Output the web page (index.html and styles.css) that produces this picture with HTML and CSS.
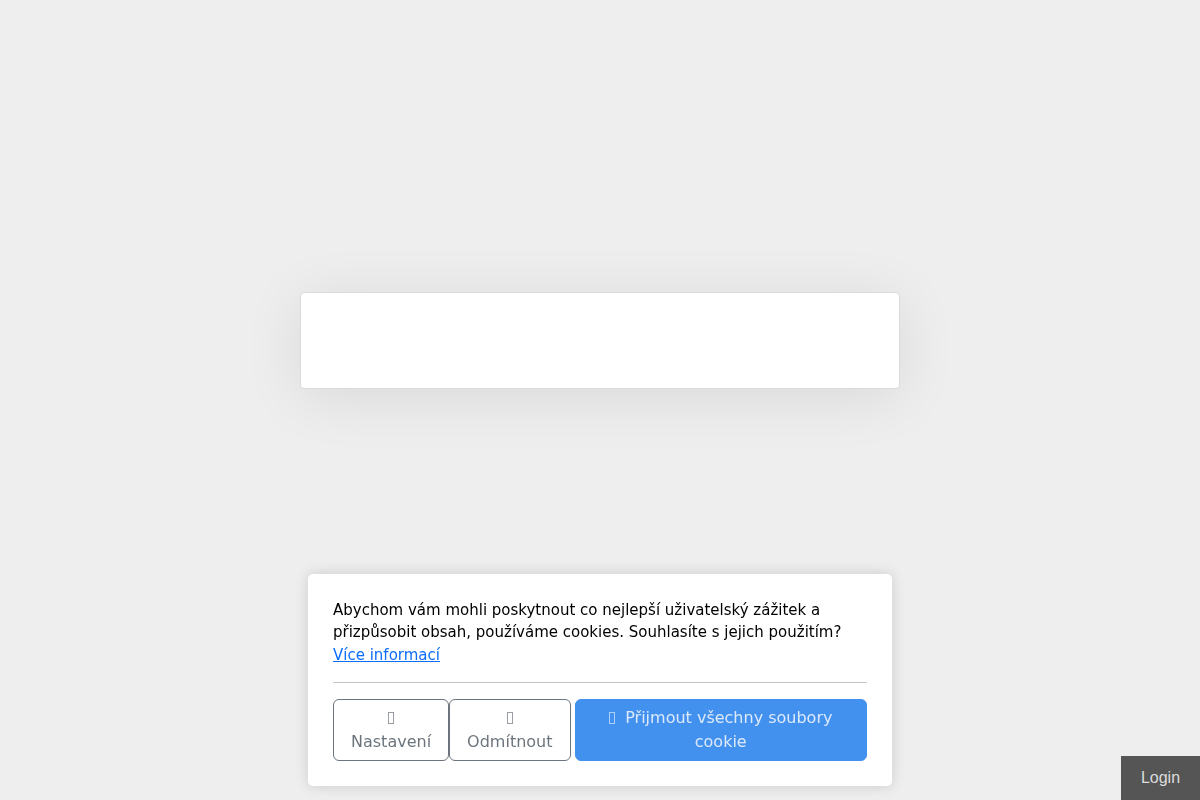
FILE: index.html
```html
<!DOCTYPE html>
<html lang="cs">
<head>
  <meta charset="UTF-8">
  <title>Login</title>
  <link rel="stylesheet" href="styles.css">
</head>
<body>
  <div class="page">
    <div class="panel"></div>
  </div>

  <div class="cookie-box">
    <p class="cookie-text">
      Abychom vám mohli poskytnout co nejlepší uživatelský zážitek a přizpůsobit obsah, používáme cookies. Souhlasíte s jejich použitím?
      <br><a href="#">Více informací</a>
    </p>
    <hr>
    <div class="cookie-buttons">
      <button class="btn btn-outline"><span class="icon"></span><br>Nastavení</button>
      <button class="btn btn-outline"><span class="icon"></span><br>Odmítnout</button>
      <button class="btn btn-primary"><span class="icon"></span>&nbsp; Přijmout všechny soubory cookie</button>
    </div>
  </div>

  <a class="login" href="#">Login</a>
</body>
</html>
```

FILE: styles.css
```css
html, body {
  margin: 0;
  padding: 0;
}

body {
  font-family: "DejaVu Sans", sans-serif;
  font-size: 16px;
  background-color: #eeeeee;
  color: #000;
}

.page {
  display: flex;
  justify-content: center;
  padding-top: 292px;
  min-height: 100vh;
  box-sizing: border-box;
}

.panel {
  width: 598px;
  height: 95px;
  background-color: white;
  border: 1px solid #dadada;
  border-radius: 4px;
  box-shadow: 0 8px 60px rgba(0, 0, 0, 0.09);
}

.cookie-box {
  position: fixed;
  left: 308px;
  bottom: 14px;
  width: 534px;
  padding: 25px;
  background-color: white;
  border-radius: 5px;
  box-shadow: 0 0 14px rgba(0, 0, 0, 0.15);
}

.cookie-text {
  margin: 0;
  font-size: 15px;
  line-height: 22.5px;
}

.cookie-text a {
  color: #0d6efd;
  text-decoration: underline;
}

hr {
  border: none;
  border-top: 1px solid #c4c4c4;
  margin: 16px 0;
}

.cookie-buttons {
  display: flex;
  align-items: stretch;
}

.btn {
  font-family: "DejaVu Sans", sans-serif;
  font-size: 16px;
  line-height: 24px;
  padding: 6px 17px;
  border-radius: 6px;
  text-align: center;
  cursor: pointer;
}

.btn-outline {
  background-color: white;
  color: #6c757d;
  border: 1px solid #6c757d;
}

.btn-outline + .btn-outline {
  margin-right: 4px;
}

.btn-primary {
  flex: 1;
  background-color: #4391ee;
  color: #dce9fb;
  border: 1px solid #4391ee;
}

.icon {
  display: inline-block;
  width: 4px;
  height: 10px;
  border: 1px solid currentColor;
  opacity: 0.7;
  vertical-align: -1px;
}

.login {
  position: fixed;
  right: 0;
  bottom: 0;
  width: 79px;
  height: 44px;
  line-height: 44px;
  text-align: center;
  background-color: #555555;
  color: #dddddd;
  font-family: "Liberation Sans", Arial, sans-serif;
  font-size: 16px;
  text-decoration: none;
}
```
